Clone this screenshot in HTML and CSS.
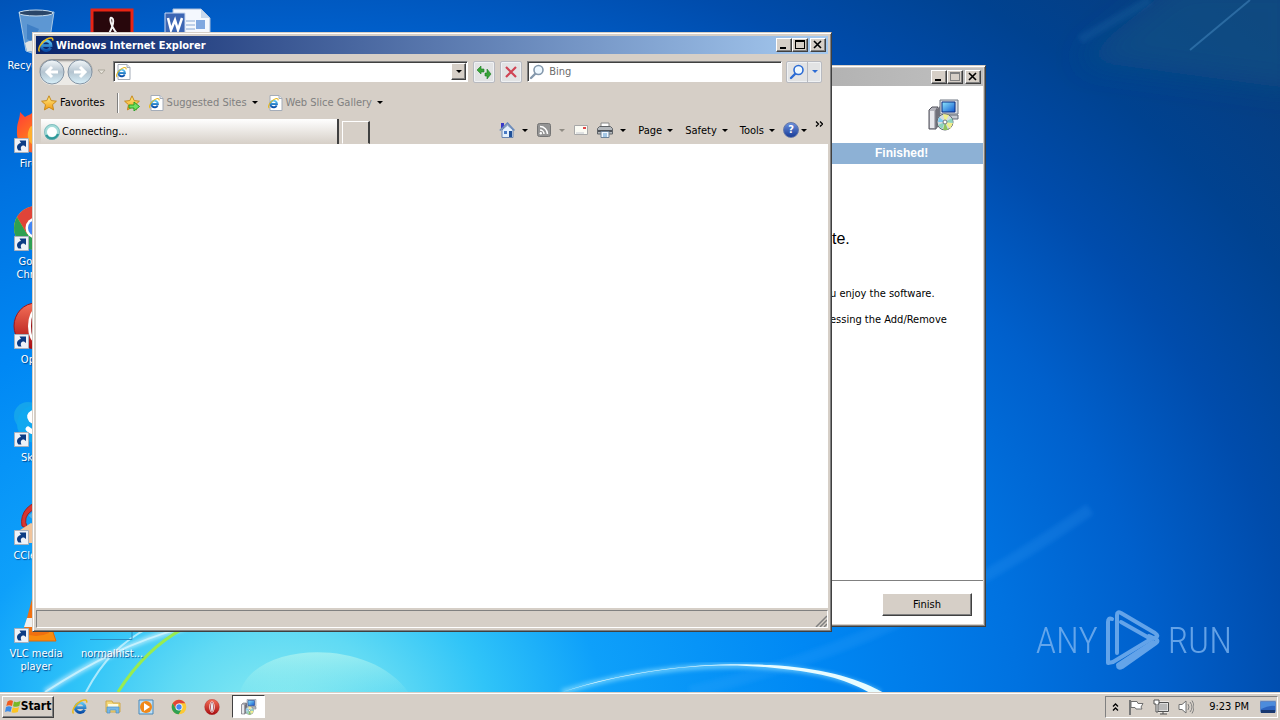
FILE: index.html
```html
<!DOCTYPE html>
<html lang="en">
<head>
    <meta charset="UTF-8">
    <meta name="viewport" content="width=device-width, initial-scale=1.0">
    <title>Desktop</title>
    <link rel="stylesheet" href="styles.css">
</head>
<body>
    <!-- Shared icons -->
    <svg class="defs" aria-hidden="true">
        <defs>
            <linearGradient id="gE" x1="0" y1="0" x2="0" y2="1">
                <stop offset="0" stop-color="#5cc4f4"/><stop offset="1" stop-color="#0a4ea8"/>
            </linearGradient>
            <linearGradient id="gBall" x1="0" y1="0" x2="0" y2="1">
                <stop offset="0" stop-color="#f4f8fa"/><stop offset=".5" stop-color="#b4c4d0"/><stop offset="1" stop-color="#d8f0fa"/>
            </linearGradient>
            <linearGradient id="gStar" x1="0" y1="0" x2="0" y2="1">
                <stop offset="0" stop-color="#fff08a"/><stop offset="1" stop-color="#f49a10"/>
            </linearGradient>
            <linearGradient id="gRed" x1="0" y1="0" x2="0" y2="1">
                <stop offset="0" stop-color="#f47058"/><stop offset="1" stop-color="#a80c10"/>
            </linearGradient>
            <linearGradient id="gScreen" x1="0" y1="0" x2="1" y2="1">
                <stop offset="0" stop-color="#90e8fc"/><stop offset="1" stop-color="#1058d0"/>
            </linearGradient>
            <linearGradient id="gFox" x1="0" y1="0" x2="1" y2="1">
                <stop offset="0" stop-color="#ff3c38"/><stop offset=".5" stop-color="#ff7a1c"/><stop offset="1" stop-color="#e0206c"/>
            </linearGradient>
        </defs>
        <symbol id="ie" viewBox="0 0 16 16">
            <path d="M12.6 10.6A4.8 4.8 0 1 1 13 8.6H4.6" fill="none" stroke="url(#gE)" stroke-width="2.8"/>
            <path d="M1.6 14.6C-.8 12 3 5 9 2c4-2 6.400-1.200 5.600 1.600" fill="none" stroke="#e8b818" stroke-width="1.500"/>
        </symbol>
        <symbol id="page" viewBox="0 0 16 16">
            <path d="M3 .5h9l3 3v12H3z" fill="#fff" stroke="#a4acb8"/>
            <path d="M12 .5v3h3" fill="#e4e8ee" stroke="#a4acb8"/>
            <use href="#ie" x="1" y="3" width="11" height="11"/>
        </symbol>
        <symbol id="star" viewBox="0 0 16 16">
            <path d="M8 .8l2.200 4.800 5.200.6-3.900 3.500 1.100 5.200L8 12.300l-4.600 2.600 1.100-5.200L.6 6.200l5.200-.6z" fill="url(#gStar)" stroke="#c88a1c"/>
        </symbol>
        <symbol id="setup" viewBox="0 0 32 32">
            <path d="M1 11l3-3h6l-2 3v19H1z" fill="#b4b4bc" stroke="#50505a"/>
            <path d="M2 12h4v17H2z" fill="#e8e8ec"/>
            <path d="M8 11l4-4v19l-4 4z" fill="#70707a"/>
            <path d="M12 1h18v14H12z" fill="#d8dce4" stroke="#707884"/>
            <path d="M14 3h13v10H14z" fill="url(#gScreen)" stroke="#0a2c80"/>
            <path d="M17 16h13v4H17z" fill="#c8ccd4" stroke="#606874"/>
            <circle cx="17" cy="23" r="8" fill="#d4dce0" stroke="#606870"/>
            <path d="M17 23l-2-8 6 1zM17 23l8 1-3 6z" fill="#f0f08c"/>
            <path d="M17 23l7-4 1 5zM17 23l-7 3 4 4z" fill="#8cd4bc"/>
            <path d="M17 23l-6-5-1 5z" fill="#7ccaf0"/>
            <path d="M17 23l-2 8h5z" fill="#8cc45c"/>
            <circle cx="17" cy="23" r="2" fill="#fff" stroke="#70787c"/>
        </symbol>
        <symbol id="chrome" viewBox="0 0 48 48">
            <circle cx="24" cy="24" r="22" fill="#fcc934"/>
            <path d="M5 13A22 22 0 0 1 43 13H24L15 30z" fill="#e04438"/>
            <path d="M5 13A22 22 0 0 0 23 46l10-17-18 1z" fill="#2ea052"/>
            <circle cx="24" cy="24" r="10.500" fill="#fff"/><circle cx="24" cy="24" r="8" fill="#4286f4"/>
        </symbol>
        <symbol id="opera" viewBox="0 0 48 48">
            <ellipse cx="24" cy="24" rx="22" ry="23" fill="url(#gRed)" stroke="#a01418"/>
            <ellipse cx="24" cy="24" rx="8" ry="17" fill="#fff"/>
            <ellipse cx="24" cy="24" rx="5" ry="16" fill="#9a1014"/>
            <ellipse cx="24" cy="24" rx="3" ry="15" fill="#e8eef4"/>
        </symbol>
        <symbol id="shortcut" viewBox="0 0 15 15">
            <path d="M.5.5h14v14H.5z" fill="#eef2f8" stroke="#a8b0bc"/>
            <path d="M4.500 12.500C1.500 9 3.500 5.500 7 5L5.500 2.500H12V9L10 7.500C7 7.500 6 9.500 7.500 12.500z" fill="#0c3c84"/>
        </symbol>
        <symbol id="lens" viewBox="0 0 16 16">
            <path d="M6.500 9.500L2 14" stroke="currentColor" stroke-width="2.400" stroke-linecap="round"/>
            <circle cx="9.500" cy="6" r="4.500" fill="#eef8ff" stroke="currentColor" stroke-width="1.600"/>
        </symbol>
        <symbol id="minimize" viewBox="0 0 12 10"><path d="M2 7h6v2H2z"/></symbol>
        <symbol id="maximize" viewBox="0 0 12 10"><path d="M1 0h10v9H1zM2 2v6h8V2z" fill-rule="evenodd"/></symbol>
        <symbol id="close" viewBox="0 0 12 10"><path d="M2 1l7 7M9 1L2 8" stroke="currentColor" stroke-width="1.600"/></symbol>
    </svg>

    <main class="desktop">
        <svg class="wallpaper" viewBox="0 0 1280 693" preserveAspectRatio="none" aria-hidden="true">
            <defs>
                <filter id="soft"><feGaussianBlur stdDeviation="2"/></filter>
                <filter id="haze" x="-50%" y="-50%" width="200%" height="200%"><feGaussianBlur stdDeviation="14"/></filter>
                <linearGradient id="gGlow" x1="0" y1="0" x2="0" y2="1">
                    <stop offset="0" stop-color="#c8fcf0" stop-opacity=".55"/><stop offset="1" stop-color="#a0f0ec" stop-opacity=".1"/>
                </linearGradient>
            </defs>
            <path d="M1080 60L1180-20H1300V90z" fill="#145484" fill-opacity=".6" filter="url(#haze)"/>
            <path d="M690 693C850 655 960 600 1090 510" fill="none" stroke="#58b4ff" stroke-opacity=".14" stroke-width="12" filter="url(#soft)"/>
            <path d="M1190 50L1250 0" stroke="#60a8e0" stroke-opacity=".35" stroke-width="2"/>
            <path d="M1080 40L1150 0" stroke="#4090d0" stroke-opacity=".12" stroke-width="9" filter="url(#soft)"/>
            <path d="M240 693C255 642 370 638 408 693" fill="url(#gGlow)"/>
            <path d="M45 693C90 664 130 643 185 628" fill="none" stroke="#fff" stroke-opacity=".6" stroke-width="5" filter="url(#soft)"/>
            <path d="M45 693C90 664 130 643 185 628M86 693C102 662 122 642 150 628" fill="none" stroke="#dcf8ff" stroke-opacity=".7" stroke-width="2"/>
            <path d="M118 693C135 666 156 644 184 629" fill="none" stroke="#98ec50" stroke-width="3"/>
            <path d="M562 693C640 668 720 664 770 668S850 680 880 694" fill="none" stroke="#a0e8ff" stroke-opacity=".6" stroke-width="5" filter="url(#soft)"/>
            <path d="M562 693C640 667 720 663 770 666S856 678 884 694H870C846 680 820 673 765 668S640 669 562 693z" fill="#e8fcff"/>
        </svg>

        <div class="icons">
            <div class="shortcut recycle">
                <svg class="big" viewBox="0 0 48 48"><path d="M7 4h35l-6 39q-11 5-22 0z" fill="#7cacd8" fill-opacity=".75" stroke="#a8c8e4"/><ellipse cx="24" cy="5" rx="17" ry="3" fill="#2a4668" stroke="#c8dcec"/><path d="M15 16l12 5-6 13-6-3z" fill="#2c70bc" opacity=".6"/><path d="M13 35q8-6 18 2l-4 7-12-1z" fill="#e0e4e4"/></svg>
                <span>Recycle Bin</span>
            </div>
            <div class="shortcut acrobat">
                <svg class="big" viewBox="0 0 48 48"><path d="M4 2h40v44H4z" fill="#28070c" stroke="#e82414" stroke-width="3"/><path d="M13 34C24 26 27 12 24 10s-3 8 9 20c-6-3-12-2-20 4z" fill="none" stroke="#f4f4f4" stroke-width="2"/></svg>
            </div>
            <div class="shortcut word">
                <svg class="big" viewBox="0 0 48 48"><path d="M9 1h28l9 9v37H9z" fill="#f4f8fe" stroke="#a8bcd8"/><path d="M37 1v9h9z" fill="#c8d8ec"/><path d="M22 13h9M22 17h9M22 21h9" stroke="#88a8d4"/><path d="M32 12h9v9h-9z" fill="#80a8e0"/><path d="M1 5h20v22H1z" fill="#3c66b4" stroke="#c8d8f0"/><path d="M4 10l3 12 4-10 3 10 4-12" fill="none" stroke="#fff" stroke-width="2.500"/></svg>
            </div>
            <div class="shortcut firefox">
                <svg class="big" viewBox="0 0 48 48"><path d="M8 6l5 5c3-2 5-2 7-4l2 4c14-3 24 4 24 17S36 47 24 47 4 37 5 24C5 16 8 13 8 6z" fill="url(#gFox)"/><path d="M19 20l8 3-4 6 9 4-8 7c-8-2-11-12-5-20z" fill="#ffb030"/></svg>
                <svg class="arrow"><use href="#shortcut"/></svg>
                <span>Firefox</span>
            </div>
            <div class="shortcut google">
                <svg class="big"><use href="#chrome"/></svg>
                <svg class="arrow"><use href="#shortcut"/></svg>
                <span>Google Chrome</span>
            </div>
            <div class="shortcut opera">
                <svg class="big"><use href="#opera"/></svg>
                <svg class="arrow"><use href="#shortcut"/></svg>
                <span>Opera</span>
            </div>
            <div class="shortcut skype">
                <svg class="big" viewBox="0 0 48 48"><circle cx="16" cy="16" r="14" fill="#14a4ec"/><circle cx="32" cy="32" r="14" fill="#0c94e0"/><circle cx="24" cy="24" r="19" fill="#10a8f0"/><path d="M31 14c-8-5-17 0-12 6 3 3 12 3 12 8s-10 6-15 1" fill="none" stroke="#fff" stroke-width="5" stroke-linecap="round"/></svg>
                <svg class="arrow"><use href="#shortcut"/></svg>
                <span>Skype</span>
            </div>
            <div class="shortcut ccleaner">
                <svg class="big" viewBox="0 0 48 48"><path d="M32 4A20 20 0 0 0 10 28l8 4a10 10 0 0 1 14-18z" fill="#d83430" stroke="#a02020"/><path d="M2 36l17-11 7 4-5 16H4z" fill="#f0c49c"/><path d="M18 19l7-6" stroke="#50b0e4" stroke-width="4"/></svg>
                <svg class="arrow"><use href="#shortcut"/></svg>
                <span>CCleaner</span>
            </div>
            <div class="shortcut vlc">
                <svg class="big" viewBox="0 0 48 48"><path d="M8 33h32l4 12H3z" fill="#f88c10" stroke="#e06808"/><path d="M20 3h8l9 34q-13 6-26 0z" fill="#f07010"/><path d="M15 22h18l3 9H12z" fill="#f0f0f0"/></svg>
                <svg class="arrow"><use href="#shortcut"/></svg>
                <span>VLC media player</span>
            </div>
            <div class="shortcut normal">
                <svg class="big" viewBox="0 0 48 48"><path d="M2 43.500h42V30" fill="none" stroke="#2c8cc0"/></svg>
                <span>normalhist...</span>
            </div>
        </div>

        <div class="watermark">
            <span>ANY</span>
            <svg viewBox="0 0 56 62"><g fill="none" stroke="currentColor" stroke-width="4" stroke-linejoin="round" stroke-linecap="round"><path d="M7 9Q3 7 3 12v41l5-1 38-23L16 12"/><path d="M12 43V5q0-4 4-2l34 20q4 3 1 4"/><path d="M44 26l7 3q3 2 0 4L17 57q-4 2-4-2l35-23"/></g></svg>
            <span>RUN</span>
        </div>

        <section class="window setup">
            <header class="titlebar inactive">
                <button class="ctl" aria-label="Minimize"><svg><use href="#minimize"/></svg></button>
                <button class="ctl" aria-label="Maximize" disabled><svg><use href="#maximize"/></svg></button>
                <button class="ctl close" aria-label="Close"><svg><use href="#close"/></svg></button>
            </header>
            <div class="setup-head"><svg><use href="#setup"/></svg></div>
            <div class="setup-banner">Finished!</div>
            <div class="setup-body">
                <h1>te.</h1>
                <p>u enjoy the software.</p>
                <p>essing the Add/Remove</p>
            </div>
            <footer class="setup-foot"><button class="finish">Finish</button></footer>
        </section>

        <section class="window browser">
            <header class="titlebar">
                <svg class="i16"><use href="#ie"/></svg>
                <h2>Windows Internet Explorer</h2>
                <button class="ctl" aria-label="Minimize"><svg><use href="#minimize"/></svg></button>
                <button class="ctl" aria-label="Maximize"><svg><use href="#maximize"/></svg></button>
                <button class="ctl close" aria-label="Close"><svg><use href="#close"/></svg></button>
            </header>

            <div class="navbar">
                <div class="travel">
                    <button aria-label="Back"><svg viewBox="0 0 26 26"><circle cx="13" cy="13" r="12" fill="url(#gBall)" stroke="#8494a4"/><path d="M13 8l-5 5 5 5M8 13h11" fill="none" stroke="#fff" stroke-width="3"/></svg></button>
                    <button aria-label="Forward"><svg viewBox="0 0 26 26"><circle cx="13" cy="13" r="12" fill="url(#gBall)" stroke="#8494a4"/><path d="M13 8l5 5-5 5M18 13H7" fill="none" stroke="#fff" stroke-width="3"/></svg></button>
                </div>
                <button class="recent" aria-label="Recent pages"><svg viewBox="0 0 9 6"><path d="M1 1h7L4.500 5z" fill="#e8e4dc" stroke="#aca89c"/></svg></button>
                <div class="field address">
                    <svg class="i16"><use href="#page"/></svg>
                    <input type="text" aria-label="Address">
                    <button class="drop" aria-label="Show address list"><i class="tri"></i></button>
                </div>
                <button class="tool refresh" aria-label="Refresh"><svg viewBox="0 0 16 16"><path d="M1 6l4-4v3h3v3H5v2zM15 10l-4 5v-3H9V9h2V5z" fill="#38a438" stroke="#1c7c24" stroke-width=".6"/></svg></button>
                <button class="tool" aria-label="Stop"><svg viewBox="0 0 16 16"><path d="M3 3l10 10M13 3L3 13" stroke="#d04454" stroke-width="2.200"/></svg></button>
                <div class="field search">
                    <svg class="i16"><use href="#lens"/></svg>
                    <input type="text" placeholder="Bing" aria-label="Search">
                </div>
                <div class="go">
                    <button aria-label="Search"><svg class="i16"><use href="#lens"/></svg></button>
                    <button aria-label="Search options"><i class="tri"></i></button>
                </div>
            </div>

            <div class="favbar">
                <button class="fav"><svg class="i16"><use href="#star"/></svg>Favorites</button>
                <span class="sep"></span>
                <button aria-label="Add to Favorites Bar"><svg class="i16" viewBox="0 0 16 16"><use href="#star"/><path d="M5 10h5V7l5.500 4.500L10 16v-3H5z" fill="#70e060" stroke="#28a028"/></svg></button>
                <button class="link"><svg class="i16"><use href="#page"/></svg>Suggested Sites<i class="tri"></i></button>
                <button class="link"><svg class="i16"><use href="#page"/></svg>Web Slice Gallery<i class="tri"></i></button>
            </div>

            <div class="tabbar">
                <button class="tab"><svg class="i16" viewBox="0 0 16 16"><circle cx="8" cy="8" r="6.500" fill="#fff" stroke="#a4dcd8" stroke-width="3"/><path d="M2 11A6.500 6.500 0 0 0 14 10" fill="none" stroke="#2c9898" stroke-width="2.500"/><circle cx="8" cy="8" r="7.500" fill="none" stroke="#6caab0" stroke-width=".6"/></svg>Connecting...</button>
                <button class="newtab" aria-label="New Tab"></button>
                <div class="commands">
                    <button aria-label="Home"><svg class="i16" viewBox="0 0 16 16"><path d="M2 1h3v5H2z" fill="#3838c8"/><path d="M3 8v7.500h11V8L8.500 3z" fill="#e4f0fc" stroke="#6884b0"/><path d="M.8 8.500L8.500 1l7 7.500" fill="none" stroke="#6c8cbc" stroke-width="1.500"/><path d="M5 9h3v3H5z" fill="#487ac4"/><path d="M10 9h3v6h-3z" fill="#205098"/></svg><i class="tri"></i></button>
                    <button aria-label="Feeds" disabled><svg class="i16" viewBox="0 0 16 16"><rect x="1.500" y="1.500" width="13" height="13" rx="2" fill="#949494" stroke="#747474"/><path d="M4 8a4 4 0 0 1 4 4M4 4.500a7.500 7.500 0 0 1 7.500 7.500" fill="none" stroke="#fff" stroke-width="1.500"/><circle cx="4.800" cy="11.300" r="1.200" fill="#fff"/></svg><i class="tri"></i></button>
                    <button aria-label="Read mail"><svg class="i16" viewBox="0 0 16 16"><path d="M1.500 3.500h13v9h-13z" fill="#fbfbf4" stroke="#a8a8a8"/><path d="M3 11h8" stroke="#c4c8d0"/><path d="M10 5h3v2h-3z" fill="#e04848"/></svg></button>
                    <button aria-label="Print"><svg class="i16" viewBox="0 0 16 16"><path d="M4 1h8v5H4z" fill="#fff" stroke="#888"/><path d="M.5 6.500l2-2h11l2 2V12H.5z" fill="#b4b8bc" stroke="#606468"/><path d="M1 8h14v2H1z" fill="#50545a"/><path d="M4 9.500h8v6H4z" fill="#eef6ff" stroke="#6c8298"/><path d="M6 12h4M6 14h4" stroke="#5898cc"/></svg><i class="tri"></i></button>
                    <button class="menu">Page<i class="tri"></i></button>
                    <button class="menu">Safety<i class="tri"></i></button>
                    <button class="menu">Tools<i class="tri"></i></button>
                    <button class="help" aria-label="Help"><span class="ball">?</span><i class="tri"></i></button>
                    <button class="more" aria-label="More commands"><svg viewBox="0 0 8 6"><path d="M1 .5L3.500 3 1 5.500M5 .5L7.500 3 5 5.500" fill="none" stroke="#000" stroke-width="1.300"/></svg></button>
                </div>
            </div>

            <div class="view"></div>
            <footer class="status">
                <svg viewBox="0 0 12 12"><path d="M1 12L12 1M5 12l7-7M9 12l3-3" stroke="#808080" stroke-width="1.500"/></svg>
            </footer>
        </section>
    </main>

    <nav class="taskbar">
        <button class="start"><svg class="i16" viewBox="0 0 16 16"><path d="M2.500 2.500q3-2 5.500-.5L7 7Q4 5.500 1.300 7z" fill="#f05c20"/><path d="M9 2.500q3 1.500 6.500-.5L14.300 7q-3 1.500-6.300.2z" fill="#78b828"/><path d="M1 8q3-1.500 5.800 0L5.500 13Q3 11.500 0 13z" fill="#3c8ce8"/><path d="M7.800 8.300q3 1.500 6.200-.3L12.800 13q-3 1.500-6.300.3z" fill="#fcc420"/></svg>Start</button>
        <div class="quick">
            <button aria-label="Internet Explorer"><svg class="i16"><use href="#ie"/></svg></button>
            <button aria-label="Windows Explorer"><svg class="i16" viewBox="0 0 16 16"><path d="M1 2h6l1 2h7v9H1z" fill="#f4d878" stroke="#d0a848"/><path d="M3 5h10v3H3z" fill="#fffbe0"/><path d="M2 8h12v6h-3v-3H5v3H2z" fill="#78b8e8" stroke="#4c90c4" stroke-width=".7"/></svg></button>
            <button aria-label="Media Player"><svg class="i16" viewBox="0 0 16 16"><path d="M1 1h14v14H1z" fill="#bce0f8" stroke="#4888b8"/><circle cx="8" cy="8" r="6" fill="#f08818"/><path d="M6 4l6 4-6 4z" fill="#fff"/></svg></button>
            <button aria-label="Google Chrome"><svg class="i16"><use href="#chrome"/></svg></button>
            <button aria-label="Opera"><svg class="i16"><use href="#opera"/></svg></button>
        </div>
        <button class="task" aria-label="Setup"><svg class="i16"><use href="#setup"/></svg></button>
        <div class="tray">
            <button aria-label="Show hidden icons"><svg class="chev" viewBox="0 0 7 8"><path d="M1 3.500L3.500 1 6 3.500M1 7.500L3.500 5 6 7.500" fill="none" stroke="#000" stroke-width="1.300"/></svg></button>
            <svg class="i16" viewBox="0 0 16 16"><path d="M2 1v15" stroke="#787878" stroke-width="2"/><path d="M3 2.500h6l1 2h5l-2 3.500 1 2H8L7 8.500H3z" fill="#fff" stroke="#707070"/></svg>
            <svg class="i16" viewBox="0 0 16 16"><path d="M4.500 3.500h11v9h-11z" fill="#b8b8b8" stroke="#fff" stroke-width="2"/><path d="M4.500 3.500h11v9h-11zM7 15h7M10 13v2" fill="none" stroke="#505050"/><path d="M1 1h5v4H5v8H3V5H1z" fill="#fff" stroke="#505050"/></svg>
            <svg class="i16" viewBox="0 0 16 16"><path d="M1 5.500h3L8 2v12l-4-3.500H1z" fill="#fff" stroke="#707070"/><path d="M10 5q2 3 0 6M12 3q4 5 0 10M14 1.500q4 6.500 0 13" fill="none" stroke="#808080"/></svg>
            <time>9:23 PM</time>
            <button aria-label="Show desktop"><svg class="i16" viewBox="0 0 16 16"><path d="M0 2h16v11H0z" fill="#2c64c0" stroke="#90a8c8"/><path d="M1 3h14v4q-6-1-14 3z" fill="#4c8cdc"/><path d="M1 11h14v3H1z" fill="#183870"/></svg></button>
        </div>
    </nav>
</body>
</html>
```

FILE: styles.css
```css
* {
    box-sizing: border-box;
}
body {
    margin: 0;
    height: 100vh;
    display: flex;
    flex-direction: column;
    overflow: hidden;
    font-family: "DejaVu Sans Condensed", "Noto Sans", sans-serif;
    font-size: 11px;
    line-height: 13px;
    color: #000;
}
button, input {
    font: inherit;
    color: inherit;
    padding: 0;
    border: none;
    background: none;
}
button {
    display: flex;
    align-items: center;
    white-space: nowrap;
}
svg {
    display: block;
    flex: none;
}
h1, h2, p {
    margin: 0;
}
.defs {
    position: absolute;
    width: 0;
    height: 0;
}
.i16 {
    width: 16px;
    height: 16px;
}
.tri {
    border: 3px solid transparent;
    border-top-color: currentColor;
    border-bottom: none;
    margin-left: 5px;
}

/* Desktop */
.desktop {
    position: relative;
    flex: 1;
    overflow: hidden;
    background: radial-gradient(ellipse 90vw 125vh at 22% 104%, #8cecf0 0%, #60daf4 10%, #30c4f8 18%, #0ea0fa 28%, #0088f4 46%, #0072e0 64%, #0060cc 76%, #004cac 88%, #004290 100%, #083c7c 115%);
}
.wallpaper {
    position: absolute;
    width: 100%;
    height: 100%;
}
.icons {
    position: relative;
    display: grid;
    grid-template-columns: repeat(3, 72px);
    grid-auto-rows: 98px;
    column-gap: 4px;
    padding-top: 8px;
}
.shortcut {
    position: relative;
    display: flex;
    flex-direction: column;
    align-items: center;
    gap: 3px;
    padding: 0 6px;
    text-align: center;
    color: #fff;
    text-shadow: 1px 1px 1px #00468c;
}
.big {
    width: 48px;
    height: 48px;
}
.arrow {
    position: absolute;
    left: 14px;
    top: 32px;
    width: 15px;
    height: 15px;
}
.recycle, .firefox, .google, .opera, .skype, .ccleaner, .vlc {
    grid-column: 1;
}
.recycle, .acrobat, .word {
    grid-row: 1;
}
.acrobat, .normal {
    grid-column: 2;
}
.vlc, .normal {
    grid-row: 7;
}
.word {
    grid-column: 3;
}
.watermark {
    position: absolute;
    right: 48px;
    bottom: 20px;
    display: flex;
    align-items: center;
    gap: 7px;
    color: #7cb4f0;
    opacity: .8;
    font: 37px/40px "Roboto Condensed", Roboto, sans-serif;
    font-weight: 300;
}
.watermark svg {
    width: 56px;
    height: 62px;
}

/* Windows */
.window {
    position: absolute;
    display: flex;
    flex-direction: column;
    padding: 2px;
    background: #d6cfc7;
    border: 1px solid;
    border-color: #d6cfc7 #404040 #404040 #d6cfc7;
    box-shadow: inset 1px 1px #fff, inset -1px -1px #808080;
}
.browser {
    left: 32px;
    top: 32px;
    width: 800px;
    height: 600px;
    padding: 3px;
}
.setup {
    left: 796px;
    top: 65px;
    width: 190px;
    height: 562px;
}
.titlebar {
    display: flex;
    align-items: center;
    height: 18px;
    padding: 0 2px;
    color: #fff;
    background: linear-gradient(90deg, #0a246a, #a6caf0);
}
.titlebar.inactive {
    justify-content: flex-end;
    background: linear-gradient(90deg, #b0b0b0, #c0c0c0);
}
.titlebar h2 {
    flex: 1;
    font-size: 11px;
    padding-left: 2px;
}
.ctl, .drop, .finish, .start {
    justify-content: center;
    background: #d6cfc7;
    border: 1px solid;
    border-color: #fff #404040 #404040 #fff;
    box-shadow: inset -1px -1px #808080;
}
.ctl {
    width: 16px;
    height: 14px;
    color: #000;
}
.ctl svg {
    width: 12px;
    height: 10px;
    fill: currentColor;
}
.ctl:disabled {
    color: #808080;
}
.close {
    margin-left: 2px;
}

/* Setup window */
.setup-head {
    display: flex;
    justify-content: flex-end;
    padding: 13px 22px 12px;
    background: #fff;
}
.setup-head svg {
    width: 34px;
    height: 32px;
}
.setup-banner {
    padding: 4px 0 4px 76px;
    background: #8db1d5;
    color: #fff;
    font: bold 12px/13px "Liberation Sans", sans-serif;
}
.setup-body {
    flex: 1;
    padding: 65px 0 0 31px;
    background: #fff;
    border-bottom: 1px solid #808080;
}
.setup-body h1 {
    font: 16px/20px "Liberation Sans", sans-serif;
    margin: 0 0 38px 2px;
}
.setup-body p {
    margin-bottom: 13px;
}
.setup-foot {
    display: flex;
    justify-content: flex-end;
    padding: 12px 11px 8px;
    background: #fff;
}
.finish {
    width: 90px;
    height: 23px;
}

/* Browser toolbars */
.navbar {
    display: flex;
    align-items: center;
    height: 35px;
    padding: 0 6px 0 3px;
}
.travel {
    display: flex;
    gap: 2px;
    border-radius: 13px;
    background: #eceae6;
    box-shadow: inset 0 2px 2px #908c88;
}
.travel svg {
    width: 26px;
    height: 26px;
}
.recent {
    margin: 0 7px 0 4px;
}
.recent svg {
    width: 9px;
    height: 6px;
}
.field {
    display: flex;
    align-items: center;
    height: 21px;
    padding: 0 1px;
    background: #fff;
    border: 1px solid;
    border-color: #808080 #fff #fff #808080;
    box-shadow: inset 1px 1px #404040;
}
.field input {
    flex: 1;
    min-width: 0;
    padding-left: 4px;
    outline: none;
}
.field input::placeholder {
    color: #6c6c6c;
}
.address {
    flex: 7;
    margin-right: 5px;
}
.drop {
    width: 15px;
    height: 17px;
}
.drop .tri, .go .tri {
    margin: 0;
}
.tool, .go {
    height: 22px;
    border: 1px solid #b8bac0;
    border-radius: 2px;
    background: #e2e3e4;
    box-shadow: inset 0 0 0 1px #f0f2f4;
}
.tool {
    width: 22px;
    justify-content: center;
    margin-right: 5px;
}
.tool svg {
    width: 16px;
    height: 16px;
}
.search {
    flex: 5;
    margin-right: 4px;
    color: #8498ac;
}
.go {
    display: flex;
    color: #2c6cd4;
}
.go button {
    width: 20px;
    justify-content: center;
}
.go button + button {
    width: 14px;
    border-left: 1px solid #b8bac0;
}
.favbar {
    display: flex;
    align-items: center;
    height: 27px;
    padding-left: 5px;
}
.favbar svg {
    margin-right: 3px;
}
.sep {
    width: 2px;
    height: 20px;
    margin: 0 5px 0 12px;
    border-left: 1px solid #808080;
    background: #fff;
}
.link {
    margin: 0 4px 0 5px;
    color: #808080;
}
.link .tri {
    color: #000;
}
.tabbar {
    display: flex;
    align-items: flex-end;
    height: 28px;
    padding-left: 5px;
}
.tab {
    flex: 0 1 298px;
    height: 25px;
    padding-left: 3px;
    gap: 2px;
    background: linear-gradient(#fff, #d6cfc7);
    border-right: 2px solid #404040;
}
.newtab {
    width: 28px;
    height: 23px;
    margin-left: 3px;
    border: 1px solid;
    border-color: #fff #404040 transparent #fff;
    border-right-width: 2px;
}
.commands {
    display: flex;
    align-items: center;
    gap: 8px;
    height: 28px;
    margin-left: auto;
    padding-right: 5px;
}
.commands svg + .tri {
    margin-left: 7px;
}
.commands .menu {
    padding-left: 4px;
}
.commands :disabled .tri {
    color: #908c84;
}
.ball {
    width: 16px;
    height: 16px;
    border: 1px solid #6478a8;
    border-radius: 8px;
    background: linear-gradient(#6c90dc, #183c98);
    color: #fff;
    font-weight: bold;
    line-height: 14px;
}
.help .tri {
    margin-left: 2px;
}
.more {
    align-self: flex-start;
    margin-top: 5px;
}
.more svg {
    width: 8px;
    height: 6px;
}
.view {
    flex: 1;
    background: #fff;
}
.status {
    display: flex;
    justify-content: flex-end;
    align-items: flex-end;
    height: 18px;
    margin-top: 2px;
    border: 1px solid;
    border-color: #808080 #fff #fff #808080;
}
.status svg {
    width: 12px;
    height: 12px;
}

/* Taskbar */
.taskbar {
    display: flex;
    align-items: center;
    height: 28px;
    padding: 0 2px;
    background: #d6cfc7;
    border-top: 1px solid #d6cfc7;
    box-shadow: inset 0 1px #fff;
}
.start {
    width: 52px;
    height: 22px;
    font-size: 12px;
    font-weight: bold;
}
.quick {
    display: flex;
    gap: 17px;
    padding: 0 12px 0 18px;
}
.task {
    width: 33px;
    height: 23px;
    justify-content: center;
    background: #fff;
    border: 1px solid;
    border-color: #404040 #fff #fff #404040;
}
.tray {
    display: flex;
    align-items: center;
    gap: 9px;
    height: 22px;
    margin-left: auto;
    padding: 0 1px 0 6px;
    border: 1px solid;
    border-color: #808080 #fff #fff #808080;
}
.tray .chev {
    width: 7px;
    height: 8px;
}
.tray time {
    padding: 0 2px 0 6px;
}
```
